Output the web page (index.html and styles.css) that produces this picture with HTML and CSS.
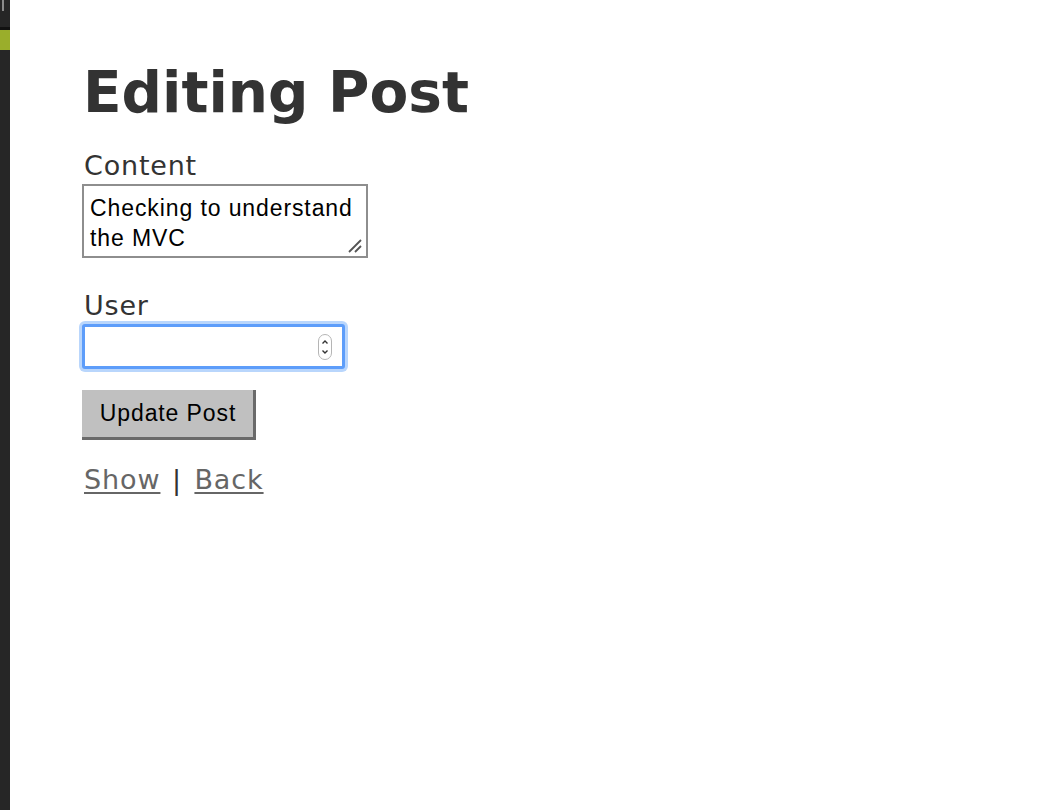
FILE: index.html
```html
<!DOCTYPE html>
<html>
<head>
<meta charset="utf-8">
<link rel="stylesheet" href="styles.css">
</head>
<body>
<div class="page">
  <div class="side">
    <div class="side-top"><span class="side-tick"></span></div>
    <div class="side-green"></div>
    <div class="side-rest"></div>
  </div>
  <div class="main">
    <h1 class="title">Editing Post</h1>
    <form class="form">
      <div class="field">
        <label class="label">Content</label>
        <div class="textarea-box">
          <div class="textarea-text">Checking to understand the MVC</div>
          <svg class="grip" width="15" height="15" viewBox="0 0 15 15"><path d="M2 14 L14 2 M8 14 L14 8" stroke="#555" stroke-width="1.8" fill="none"/></svg>
        </div>
      </div>
      <div class="field field-user">
        <label class="label">User</label>
        <div class="input-box">
          <div class="spinner">
            <svg width="14" height="26" viewBox="0 0 14 26"><rect x="0.5" y="0.5" width="13" height="25" rx="6.5" fill="#fff" stroke="#b5b5b5"/><path d="M4.5 9.5 L7 7 L9.5 9.5 M4.5 16.5 L7 19 L9.5 16.5" stroke="#333" stroke-width="1.4" fill="none"/></svg>
          </div>
        </div>
      </div>
      <div class="actions">
        <span class="button">Update Post</span>
      </div>
    </form>
    <p class="links"><a class="link" href="#">Show</a> <span class="sep">|</span> <a class="link" href="#">Back</a></p>
  </div>
</div>
</body>
</html>
```
FILE: styles.css
```css
html, body {
  margin: 0;
  padding: 0;
  background: #fff;
  height: 100%;
}
.page {
  display: flex;
  min-height: 810px;
}
.side {
  width: 10px;
  display: flex;
  flex-direction: column;
  background: #262626;
}
.side-top {
  height: 27px;
  position: relative;
  border-bottom: 3px solid #111;
}
.side-tick {
  position: absolute;
  left: 2px;
  top: 0;
  width: 2px;
  height: 11px;
  background: #8a8a8a;
}
.side-green {
  height: 20px;
  background: #9aae2b;
}
.side-rest {
  flex: 1;
}
.main {
  flex: 1;
  padding-left: 73px;
  color: #333;
  font-family: "DejaVu Sans", Verdana, sans-serif;
}
.title {
  margin: 58px 0 0 0;
  font-size: 56.5px;
  line-height: 70px;
  font-weight: bold;
  color: #333;
}
.form {
  margin: 0;
}
.field {
  margin-top: 23px;
}
.field-user {
  margin-top: 33px;
}
.label {
  display: block;
  font-size: 27px;
  line-height: 30px;
  letter-spacing: 0.8px;
  padding-left: 1px;
}
.textarea-box {
  position: relative;
  width: 282px;
  height: 70px;
  margin-top: 3px;
  margin-left: -1px;
  border: 2px solid #8e8e8e;
  background: #fff;
}
.textarea-text {
  font-family: "Liberation Sans", Arial, sans-serif;
  font-size: 23px;
  line-height: 30px;
  letter-spacing: 0.9px;
  color: #000;
  padding: 7px 6px 0 6px;
}
.grip {
  position: absolute;
  right: 4px;
  bottom: 3px;
}
.input-box {
  width: 263px;
  height: 45px;
  margin-top: 3px;
  margin-left: -1px;
  box-sizing: border-box;
  border: 3px solid #5d9dfa;
  border-radius: 3px;
  box-shadow: 0 0 0 3px #b9d6fc;
  background: #fff;
  display: flex;
  justify-content: flex-end;
  align-items: center;
  padding-right: 10px;
}
.spinner {
  display: flex;
  margin-top: 1px;
}
.actions {
  margin-top: 21px;
  margin-left: -1px;
}
.button {
  display: inline-flex;
  align-items: center;
  justify-content: center;
  box-sizing: border-box;
  width: 174px;
  height: 50px;
  background: #c0c0c0;
  border-style: solid;
  border-width: 0 3px 3px 0;
  border-color: #c0c0c0 #6a6a6a #6a6a6a #c0c0c0;
  font-family: "Liberation Sans", Arial, sans-serif;
  font-size: 23px;
  letter-spacing: 0.9px;
  color: #000;
  padding-left: 1px;
}
.links {
  margin: 25px 0 0 1px;
  font-size: 27px;
  line-height: 30px;
  letter-spacing: 0.9px;
  color: #333;
}
.sep {
  margin: 0 3px 0 2px;
}
.link {
  color: #666;
  text-decoration: underline;
  text-decoration-thickness: 2px;
  text-underline-offset: 3px;
}
```
